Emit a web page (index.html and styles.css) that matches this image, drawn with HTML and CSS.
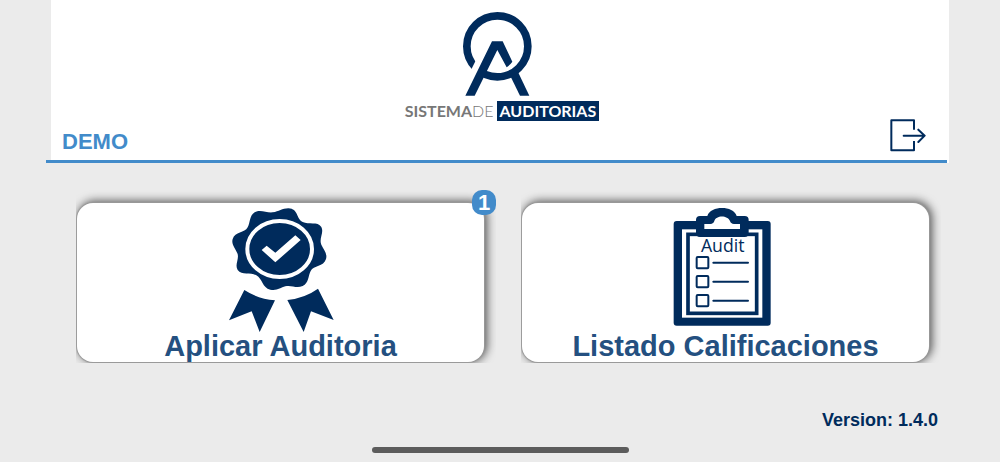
FILE: index.html
```
<!DOCTYPE html>
<html lang="es">
<head>
  <meta charset="UTF-8">
  <meta name="viewport" content="width=device-width, initial-scale=1">
  <title>Sistema de Auditorias</title>
  <link rel="stylesheet" href="styles.css">
</head>
<body>
  <header class="header">
    <div class="header-bar">
      <span class="user">DEMO</span>
      <div class="logo">
        <svg class="logo-mark" viewBox="216 33 240 255" aria-hidden="true">
          <circle cx="322" cy="139" r="91.5" fill="none" stroke="#002b5c" stroke-width="23"/>
          <path d="M263 170 L238 220 L252 244 L290 170 Z" fill="#fff"/>
          <path d="M306 124 H338 L367 185 Q360 195 350 202 L322 150 L254 287 H226 Z" fill="#002b5c"/>
          <path d="M361 228 L390 287 H418 L384 216 Z" fill="#002b5c"/>
        </svg>
        <div class="logo-text"><b>SISTEMA</b><span>DE</span><strong>AUDITORIAS</strong></div>
      </div>
      <button class="logout" type="button" aria-label="Salir">
        <svg viewBox="90 58 108 99" fill="none" stroke="#002b5c" stroke-width="6" stroke-linejoin="round">
          <path d="M162 90 V62 H94 V152 H162 V124"/>
          <path d="M131 108 H193 M175 90 L194 108 L175 127" stroke-linecap="round"/>
        </svg>
      </button>
    </div>
    <div class="header-line"></div>
  </header>

  <main class="menu">
    <div class="menu-item">
      <a class="card" href="#aplicar">
        <svg class="icon-seal" viewBox="54 51 318 378" aria-hidden="true">
          <g fill="#002b5c">
            <path d="M188 67 C207 65 216 55 235 55 C266 56 258 87 278 96 C296 105 323 93 334 111 C343 128 326 146 334 164 C340 178 353 190 348 207 C341 231 311 225 302 243 C294 258 297 279 278 288 C259 297 244 284 226 289 C211 293 201 303 181 299 C156 294 158 266 139 256 C122 246 96 257 83 240 C73 224 89 206 82 190 C77 175 63 164 68 147 C75 124 104 130 113 112 C121 98 118 77 134 67 C151 57 169 69 188 67 Z"/>
            <path d="M103 300 Q145 327 195 331 L149 426 L125 364 L57 391 Z"/>
            <path d="M324 296 L371 390 L303 364 L281 426 L232 330 Q285 324 324 296 Z"/>
          </g>
          <ellipse cx="209" cy="177" rx="97" ry="84" fill="none" stroke="#fff" stroke-width="12"/>
          <path d="M155 180 L170 167 L196 188 L256 136 L272 150 L196 217 Z" fill="#fff"/>
        </svg>
        <span class="card-title">Aplicar Auditoria</span>
      </a>
      <span class="badge">1</span>
    </div>

    <div class="menu-item">
      <a class="card" href="#listado">
        <svg class="icon-list" viewBox="69 30 318 357" aria-hidden="true">
          <rect x="71" y="72" width="291" height="314" rx="9" fill="#002b5c"/>
          <rect x="96" y="97" width="241" height="265" fill="#fff"/>
          <rect x="114" y="112" width="206" height="237" fill="#fff" stroke="#002b5c" stroke-width="11"/>
          <path d="M150 57 H172 C182 25 250 25 260 57 H284 Q296 57 296 69 V108 Q296 120 284 120 H150 Q138 120 138 108 V69 Q138 57 150 57 Z" fill="#002b5c"/>
          <path d="M163 81 H181 Q191 80 193 72 C198 54 233 54 240 72 Q242 80 252 81 H270 V96 H163 Z" fill="#fff"/>
          <text class="icon-text" x="218" y="164" text-anchor="middle">Audit</text>
          <g fill="none" stroke="#002b5c" stroke-width="6">
            <rect x="140" y="180" width="35" height="34" rx="3"/>
            <rect x="140" y="237" width="35" height="34" rx="3"/>
            <rect x="140" y="294" width="35" height="34" rx="3"/>
            <path d="M190 197 H294 M190 254 H294 M190 311 H294" stroke-linecap="round"/>
          </g>
        </svg>
        <span class="card-title">Listado Calificaciones</span>
      </a>
    </div>
  </main>

  <footer class="footer">
    <p class="version">Version: 1.4.0</p>
    <div class="home-bar"></div>
  </footer>
</body>
</html>
```
FILE: styles.css
```
* { box-sizing: border-box; }

body {
  margin: 0;
  background-color: #ebebeb;
  color: #002b5c;
  font-family: "Liberation Sans", Arial, sans-serif;
}

/* header */
.header { margin: 0 51px; background-color: #fff; }
.header-bar {
  display: grid;
  grid-template-columns: 1fr auto 1fr;
  align-items: end;
  padding: 11px 23px 0 11px;
}
.user {
  padding-bottom: 6px;
  color: #428bca;
  font-size: 22px;
  line-height: 24px;
  font-weight: bold;
}
.logo {
  display: flex;
  flex-direction: column;
  align-items: center;
  padding: 0 0 39px 16px;
}
.logo-mark { width: 80px; height: 85px; }
.logo-text {
  display: flex;
  margin-top: 5px;
  font-family: Lato, sans-serif;
  font-size: 16px;
  line-height: 20px;
  color: #777;
}
.logo-text span { font-weight: 300; }
.logo-text strong {
  margin-left: 3px;
  padding: 0 3px;
  background-color: #002b5c;
  color: #fff;
}
.logout {
  justify-self: end;
  margin-bottom: 8px;
  padding: 0;
  border: 0;
  background: none;
  cursor: pointer;
}
.logout svg { display: block; width: 36px; height: 33px; }
.header-line { height: 3px; margin: 0 2px 0 -5px; background-color: #428bca; }

/* menu cards */
.menu {
  display: grid;
  grid-template-columns: 1fr 1fr;
  gap: 38px;
  padding: 40px 71px 0 77px;
}
.menu-item {
  position: relative;
  clip-path: inset(-20px -12px -1px -1px);
}
.card {
  display: flex;
  flex-direction: column;
  align-items: center;
  padding-top: 4px;
  border-radius: 16px;
  background-color: #fff;
  box-shadow: 0 0 1px 1px #999, 2px -1px 10px 1px rgba(0, 0, 0, 0.65);
  color: #245080;
  text-decoration: none;
}
.icon-seal { width: 106px; height: 126px; }
.icon-list { width: 106px; height: 119px; margin-bottom: 7px; }
.icon-text { font-family: "Open Sans", sans-serif; font-size: 53px; fill: #002b5c; }
.card-title {
  margin-top: -3px;
  font-size: 29px;
  line-height: 32px;
  font-weight: bold;
}
.badge {
  position: absolute;
  top: -13px;
  right: -12px;
  width: 24px;
  border-radius: 10px;
  background-color: #428bca;
  color: #fff;
  font-size: 22px;
  line-height: 25px;
  font-weight: bold;
  text-align: center;
}

/* footer */
.version {
  margin: 0;
  padding: 47px 62px 0 0;
  font-size: 18px;
  line-height: 22px;
  font-weight: bold;
  text-align: right;
}
.home-bar {
  width: 257px;
  height: 6px;
  margin: 16px auto 0;
  border-radius: 3px;
  background-color: #5c5c5c;
}
```
